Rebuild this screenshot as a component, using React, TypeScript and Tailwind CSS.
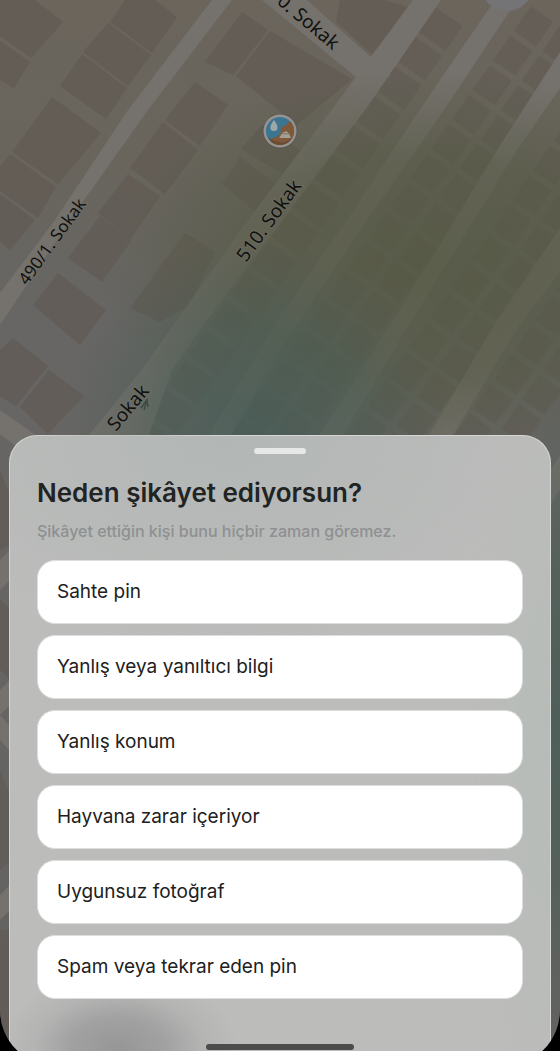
const reasons = [
  'Sahte pin',
  'Yanlış veya yanıltıcı bilgi',
  'Yanlış konum',
  'Hayvana zarar içeriyor',
  'Uygunsuz fotoğraf',
  'Spam veya tekrar eden pin',
];

const roads = [
  '212,0 232,0 148,110 77,210 0,325 0,293 55,220 128,110',
  '413,0 441,0 368,106 277,228 207,320 172,370 147,440 85,440 140,372 248,220 330,112',
  '262,0 307,0 372,58 390,76 357,94 357,78',
  '495,0 517,0 440,116 367,220 280,351 228,440 206,440 280,316 347,220 418,112',
  '560,52 560,88 517,150 474,220 412,320 340,440 316,440 393,320 455,220 497,150',
  '560,228 560,272 520,324 450,440 426,440 497,320',
  '0,410 60,452 60,480 0,434',
  '0,560 60,500 60,530 0,590',
  '0,690 60,630 60,655 0,715',
  '0,715 40,760 40,785 0,740',
  '0,895 60,835 60,860 0,920',
  '560,455 520,520 520,550 560,490',
];

const buildings = [
  '0,0 35,0 63,22 31,58 0,36',
  '0,41 30,62 14,88 0,80',
  '125,0 155,0 177,17 152,53 110,22',
  '108,23 151,55 128,86 83,52',
  '82,54 127,88 106,119 60,86',
  '52,97 101,133 58,184 12,152',
  '10,154 56,187 38,218 0,191 0,166',
  '0,194 35,220 10,250 0,242',
  '242,12 268,30 233,75 205,62',
  '270,31 352,79 297,125 236,76',
  '195,82 228,105 200,146 165,120',
  '163,122 198,150 165,194 130,168',
  '128,174 160,196 130,240 98,213',
  '100,216 131,241 102,282 68,258',
  '58,273 106,310 80,345 33,305',
  '13,338 48,366 16,406 0,396 0,350',
  '49,370 84,396 48,434 20,407',
  '262,125 300,150 283,174 241,149',
  '240,157 277,184 258,214 222,184',
  '185,233 215,252 190,305 160,322 130,308',
  '340,0 385,0 410,8 372,54 336,22',
  '0,470 12,500 10,545 0,550',
  '0,600 12,610 10,680 0,670',
  '0,770 12,800 10,860 0,870',
  '0,930 12,930 12,1040 0,1040',
];

// Rows of small lots between the parallel streets, running down-left
const lotRows = [
  { x: 448, y: 16, width: 36, columns: 1, count: 15 },
  { x: 542, y: 14, width: 27, columns: 2, count: 15 },
  { x: 582, y: 124, width: 27, columns: 2, count: 11 },
  { x: 584, y: 274, width: 27, columns: 2, count: 7 },
];

const streetNames = [
  { name: '490/1. Sokak', x: 27, y: 286, angle: -54, size: 17 },
  { name: '510. Sokak', x: 246, y: 263, angle: -54, size: 19 },
  { name: 'Sokak', x: 116, y: 432, angle: -50, size: 19 },
  { name: '0. Sokak', x: 276, y: 3, angle: 40, size: 19 },
];

function PinMarker() {
  return (
    <g transform="translate(280 131)">
      <circle r="17.5" fill="#55514a" opacity=".5" />
      <circle r="16.5" fill="#959492" />
      <circle r="14" fill="#3c7590" />
      <path d="M10 -10A14 14 0 0 1 -10 10C-7 5 -2 7 0 3C2 -1 -1 -3 4 -5C8 -6 7 -8 10 -10Z" fill="#80593a" />
      <path d="M-12.5 6A14 14 0 0 0 12.500 6A16 16 0 0 1 -9 8Z" fill="#60432f" opacity=".6" />
      <path d="M-6 -11C-4 -8 -2.500 -6 -2.500 -3.500A3.600 3.600 0 0 1 -9.700 -3.500C-9.700 -6 -8 -8 -6 -11Z" fill="#9fa6a8" />
      <path d="M2 2.500C3 .5 5 1.500 5.500 .5C6.500 -.5 7.500 1 9 2.500L11 7H-1Z" fill="#a39e96" />
      <path d="M1.500 2.800H9.500" stroke="#776c60" strokeWidth=".8" />
    </g>
  );
}

function MapBackdrop() {
  return (
    <svg
      className="absolute inset-0 h-full w-full"
      viewBox="0 0 560 1066"
      preserveAspectRatio="xMidYMin slice"
      aria-hidden="true"
    >
      <defs>
        <linearGradient id="ground" x1="0" y1="0" x2="0" y2="1">
          <stop offset="0" stopColor="#6b655c" />
          <stop offset=".15" stopColor="#69655d" />
          <stop offset=".3" stopColor="#676664" />
          <stop offset="1" stopColor="#646361" />
        </linearGradient>
        <radialGradient id="olive">
          <stop offset="0" stopColor="#545841" stopOpacity=".75" />
          <stop offset=".55" stopColor="#555943" stopOpacity=".6" />
          <stop offset="1" stopColor="#565a46" stopOpacity="0" />
        </radialGradient>
        <radialGradient id="teal">
          <stop offset="0" stopColor="#455c56" stopOpacity=".8" />
          <stop offset=".5" stopColor="#495d55" stopOpacity=".55" />
          <stop offset="1" stopColor="#4b5d55" stopOpacity="0" />
        </radialGradient>
      </defs>
      <rect width="560" height="1066" fill="url(#ground)" />
      <g fill="#5f5650" opacity=".5">
        {buildings.map((points) => (
          <polygon key={points} points={points} />
        ))}
      </g>
      <g fill="#5d564f" opacity=".42">
        {lotRows.map((row) => (
          <g key={row.x} transform={`translate(${row.x} ${row.y}) rotate(35)`}>
            {Array.from({ length: row.count * row.columns }, (_, i) => (
              <rect
                key={i}
                x={(i % row.columns) * (row.width + 8) - row.width / 2}
                y={Math.floor(i / row.columns) * 36}
                width={row.width}
                height="30"
              />
            ))}
          </g>
        ))}
      </g>
      <g fill="#75716c">
        {roads.map((points) => (
          <polygon key={points} points={points} />
        ))}
      </g>
      <ellipse cx="420" cy="270" rx="320" ry="200" fill="url(#olive)" />
      <ellipse cx="255" cy="430" rx="190" ry="190" fill="url(#teal)" />
      <ellipse cx="570" cy="720" rx="90" ry="330" fill="url(#teal)" />
      <circle cx="507" cy="-15" r="26" fill="#747477" />
      <g fill="#10110f" fontFamily='"Noto Sans", sans-serif'>
        {streetNames.map((street) => (
          <text
            key={street.name}
            transform={`translate(${street.x} ${street.y}) rotate(${street.angle})`}
            fontSize={street.size}
            stroke="#77736c"
            strokeOpacity=".5"
            strokeWidth="2"
            paintOrder="stroke"
          >
            {street.name}
          </text>
        ))}
      </g>
      <path d="M141 408L147 400L148 407M147 400L144 410" stroke="#3d4a45" strokeWidth="1.500" fill="none" />
      <PinMarker />
    </svg>
  );
}

export default function App() {
  return (
    <div className="flex min-h-screen flex-col overflow-hidden bg-black font-['Inter',sans-serif]">
      {/* Screen, its rounded corners run past the bottom edge */}
      <main className="relative -mb-[15px] flex flex-1 flex-col justify-end overflow-hidden rounded-b-[56px]">
        <MapBackdrop />

        {/* Report sheet */}
        <section
          aria-labelledby="report-title"
          className="relative mx-[9px] flex flex-col rounded-t-[28px] border border-b-0 border-white/40 bg-[#bcbcbb] bg-[radial-gradient(ellipse_120px_76px_at_108px_calc(100%_-_18px),#969696_0%,#9b9b9bcc_40%,#a8a8a866_70%,#bcbcbb00_100%),radial-gradient(ellipse_60%_35%_at_40%_0%,#b2b7b5,#b2b7b500),radial-gradient(ellipse_15%_60%_at_100%_50%,#b6bcb7,#b6bcb700)] px-[27px] pt-3 pb-[15px]"
        >
          <div className="mx-auto h-[6px] w-[52px] rounded-full bg-[#e6e8e8]" />
          <h1 id="report-title" className="mt-[21px] text-[26px] leading-9 font-semibold text-[#222423]">
            Neden şikâyet ediyorsun?
          </h1>
          <p className="mt-2 text-[16px] leading-6 font-medium text-[#8e9091]">
            Şikâyet ettiğin kişi bunu hiçbir zaman göremez.
          </p>

          {/* Reasons */}
          <div className="mt-[17px] flex flex-col gap-[11px]">
            {reasons.map((reason) => (
              <button
                key={reason}
                type="button"
                className="h-16 rounded-[18px] border border-[#dcdede] bg-white px-[19px] text-left text-[19px] text-[#202020]"
              >
                {reason}
              </button>
            ))}
          </div>

          {/* Home indicator */}
          <div className="mx-auto mt-[45px] mb-px h-[6px] w-[148px] rounded-full bg-[#4c4c4c]" />
        </section>
      </main>
    </div>
  );
}
